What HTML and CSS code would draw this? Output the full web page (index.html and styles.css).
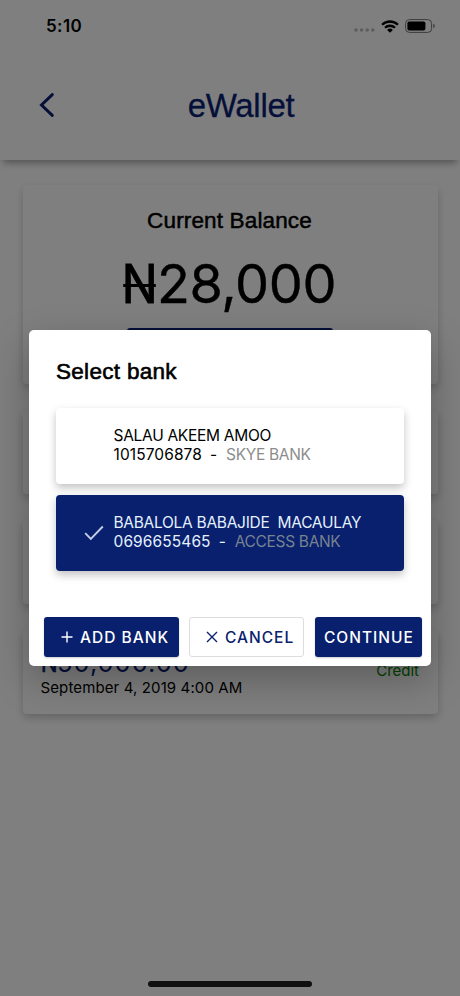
FILE: index.html
```html
<!DOCTYPE html>
<html lang="en">
<head>
<meta charset="utf-8">
<title>eWallet</title>
<link rel="stylesheet" href="styles.css">
</head>
<body>
<div class="screen">
  <header class="header">
    <div class="status">
      <span class="time">5:10</span>
      <div class="indicators">
        <svg class="dots" width="21" height="4" viewBox="0 0 21 4"><circle cx="2" cy="2" r="1.8"/><circle cx="7.6" cy="2" r="1.8"/><circle cx="13.2" cy="2" r="1.8"/><circle cx="18.8" cy="2" r="1.8"/></svg>
        <svg class="wifi" width="18" height="13" viewBox="0 0 18 13"><path d="M1.1 4.7a11.3 11.3 0 0 1 15.8 0M4 7.8a7.1 7.1 0 0 1 10 0" fill="none" stroke="#000" stroke-width="2.3"/><path d="M9 12.8 6.1 10a4.2 4.2 0 0 1 5.8 0z"/></svg>
        <svg class="battery" width="30" height="14" viewBox="0 0 30 14"><rect x=".6" y=".6" width="26" height="12.8" rx="3.8" fill="none" stroke="#777" stroke-width="1"/><rect x="2.4" y="2.5" width="18" height="9" rx="1.8"/><path d="M28.3 4.8v4.4q1.5-.6 1.5-2.2t-1.5-2.2z" fill="#777"/></svg>
      </div>
    </div>
    <div class="nav">
      <svg class="back" width="16" height="26" viewBox="0 0 16 26"><path d="M13.3 2.6 2.5 13l10.8 10.4" fill="none" stroke="#0a1f74" stroke-width="3" stroke-linecap="round"/></svg>
      <h1 class="title">eWallet</h1>
    </div>
  </header>
  <main class="content">
    <section class="card balance">
      <h2 class="balance-label">Current Balance</h2>
      <div class="balance-value"><span class="naira">N</span>28,000</div>
      <div class="fund"></div>
    </section>
    <section class="card"></section>
    <section class="card"></section>
    <section class="card entry">
      <div>
        <div class="amount"><span class="naira">N</span>50,000.00</div>
        <div class="date">September 4, 2019 4:00 AM</div>
      </div>
      <div class="type">Credit</div>
    </section>
  </main>
  <div class="home"></div>
  <div class="overlay">
    <div class="modal">
      <h2 class="modal-title">Select bank</h2>
      <div class="banks">
        <div class="bank">
          <div class="mark"></div>
          <div>
            <div class="name">SALAU AKEEM AMOO</div>
            <div class="acct"><span class="num">1015706878</span><span class="dash">-</span><span class="org">SKYE BANK</span></div>
          </div>
        </div>
        <div class="bank selected">
          <div class="mark"><svg width="20" height="16" viewBox="0 0 20 16"><path d="M1.2 8.2 6.8 14 18.8 1.5" fill="none" stroke="#c3cee6" stroke-width="1.9"/></svg></div>
          <div>
            <div class="name">BABALOLA BABAJIDE&nbsp; MACAULAY</div>
            <div class="acct"><span class="num">0696655465</span><span class="dash">-</span><span class="org">ACCESS BANK</span></div>
          </div>
        </div>
      </div>
      <div class="actions">
        <div class="btn add"><svg width="12" height="12" viewBox="0 0 12 12"><path d="M6 .5v11M.5 6h11" stroke="#fff" stroke-width="1.4"/></svg><span>ADD BANK</span></div>
        <div class="btn cancel"><svg width="12" height="12" viewBox="0 0 12 12"><path d="M1 1l10 10M11 1 1 11" stroke="#0a226e" stroke-width="1.4"/></svg><span>CANCEL</span></div>
        <div class="btn continue"><span>CONTINUE</span></div>
      </div>
    </div>
  </div>
</div>
</body>
</html>
```
FILE: styles.css
```css
* { box-sizing: border-box; }
body { margin: 0; font-family: Inter, sans-serif; color: #000; }
h1, h2 { margin: 0; font-weight: 400; }
svg { display: block; flex: none; }
.screen { position: relative; width: 460px; height: 996px; overflow: hidden; background: #fff; display: flex; flex-direction: column; }
.header { height: 160px; flex: none; background: #fff; box-shadow: 0 6px 7px -3px rgba(0,0,0,.34); }
.status { height: 52px; padding: 0 25px 0 46px; display: flex; align-items: center; justify-content: space-between; }
.time { font-size: 17px; font-weight: 600; letter-spacing: .4px; }
.indicators { display: flex; align-items: center; }
.dots { margin: 8px 6px 0 0; fill: #bbb; }
.wifi { margin-right: 6px; }
.nav { height: 106px; display: grid; grid-template-columns: 60px 1fr 60px; align-items: center; }
.back { margin-left: 39px; }
.title { text-align: center; font-family: "Liberation Sans", sans-serif; font-size: 33px; line-height: 40px; color: #0a1f74; letter-spacing: -.3px; padding: 2px 0 0 22px; -webkit-text-stroke: .3px #0a1f74; }
.content { flex: 1; padding: 25px 22px 0 23px; display: flex; flex-direction: column; gap: 26px; }
.card { height: 84px; flex: none; background: #fff; border-radius: 4px; box-shadow: 0 4px 8px rgba(0,0,0,.2); }
.balance { height: 199px; display: flex; flex-direction: column; align-items: center; }
.balance-label { margin: 23px 2px 0 0; font-family: "Liberation Sans", sans-serif; font-size: 22.5px; line-height: 26px; letter-spacing: .15px; -webkit-text-stroke: .5px #000; }
.balance-value { margin: 17px 3px 0 0; font-size: 54px; line-height: 66px; letter-spacing: -.4px; display: flex; -webkit-text-stroke: .4px #000; }
.naira { position: relative; width: .65em; display: flex; justify-content: center; letter-spacing: 0; transform: scaleX(.88); -webkit-text-stroke: .02em currentColor; }
.naira::after { content: ""; position: absolute; left: -.02em; right: -.02em; top: 50%; height: .06em; background: currentColor; }
.fund { width: 206px; height: 40px; margin: 11px 2px 0 0; background: #0b1f72; border-radius: 3px; }
.entry { padding: 18px 19px 0 17.5px; display: flex; justify-content: space-between; }
.amount { font-size: 25.5px; line-height: 30px; color: #0a1f74; display: flex; letter-spacing: .95px; }
.date { font-size: 15px; line-height: 18px; margin-top: 1px; white-space: nowrap; letter-spacing: .12px; }
.type { font-size: 15px; line-height: 18px; margin-top: 14px; color: #008400; }
.home { position: absolute; left: 148px; bottom: 9px; width: 164px; height: 6px; border-radius: 3px; background: #202020; }
.overlay { position: absolute; inset: 0; background: rgba(0,0,0,.5); display: flex; align-items: center; justify-content: center; }
.modal { width: 402px; height: 336px; background: #fff; border-radius: 5px; box-shadow: 0 14px 38px rgba(0,0,0,.27); display: flex; flex-direction: column; }
.modal-title { margin: 28px 27px 0; font-family: "Liberation Sans", sans-serif; font-size: 22.5px; line-height: 28px; letter-spacing: .3px; -webkit-text-stroke: .6px #000; }
.banks { margin: 22px 27px 0 26.5px; display: flex; flex-direction: column; gap: 11px; }
.bank { height: 76px; border-radius: 4px; background: #fff; box-shadow: 0 4px 9px rgba(0,0,0,.24); display: flex; align-items: flex-start; padding-top: 18px; font-size: 15.5px; line-height: 19px; white-space: nowrap; }
.mark { width: 58px; padding: 12px 0 0 28px; flex: none; }
.name { letter-spacing: -.29px; }
.acct { display: flex; }
.num { letter-spacing: .1px; }
.dash { margin: 0 9px 0 8px; }
.org { color: #8c8c8c; letter-spacing: -.33px; }
.selected { background: #08206e; color: #e5f1ff; }
.selected .org { color: #78838f; }
.actions { display: flex; margin: 46px 9px 0 15px; gap: 10px; }
.btn { height: 40px; border-radius: 3px; background: #08206e; color: #fff; display: flex; align-items: center; font-size: 15.5px; font-weight: 500; letter-spacing: 1px; white-space: nowrap; box-shadow: 0 1px 2px rgba(0,0,0,.2); }
.add { width: 135px; padding-left: 17px; gap: 7px; }
.cancel { width: 115px; background: #fff; color: #0a226e; border: 1px solid #ddd; padding-left: 16px; gap: 7px; box-shadow: none; }
.continue { width: 107px; padding-left: 9px; margin-left: 1px; }
```
